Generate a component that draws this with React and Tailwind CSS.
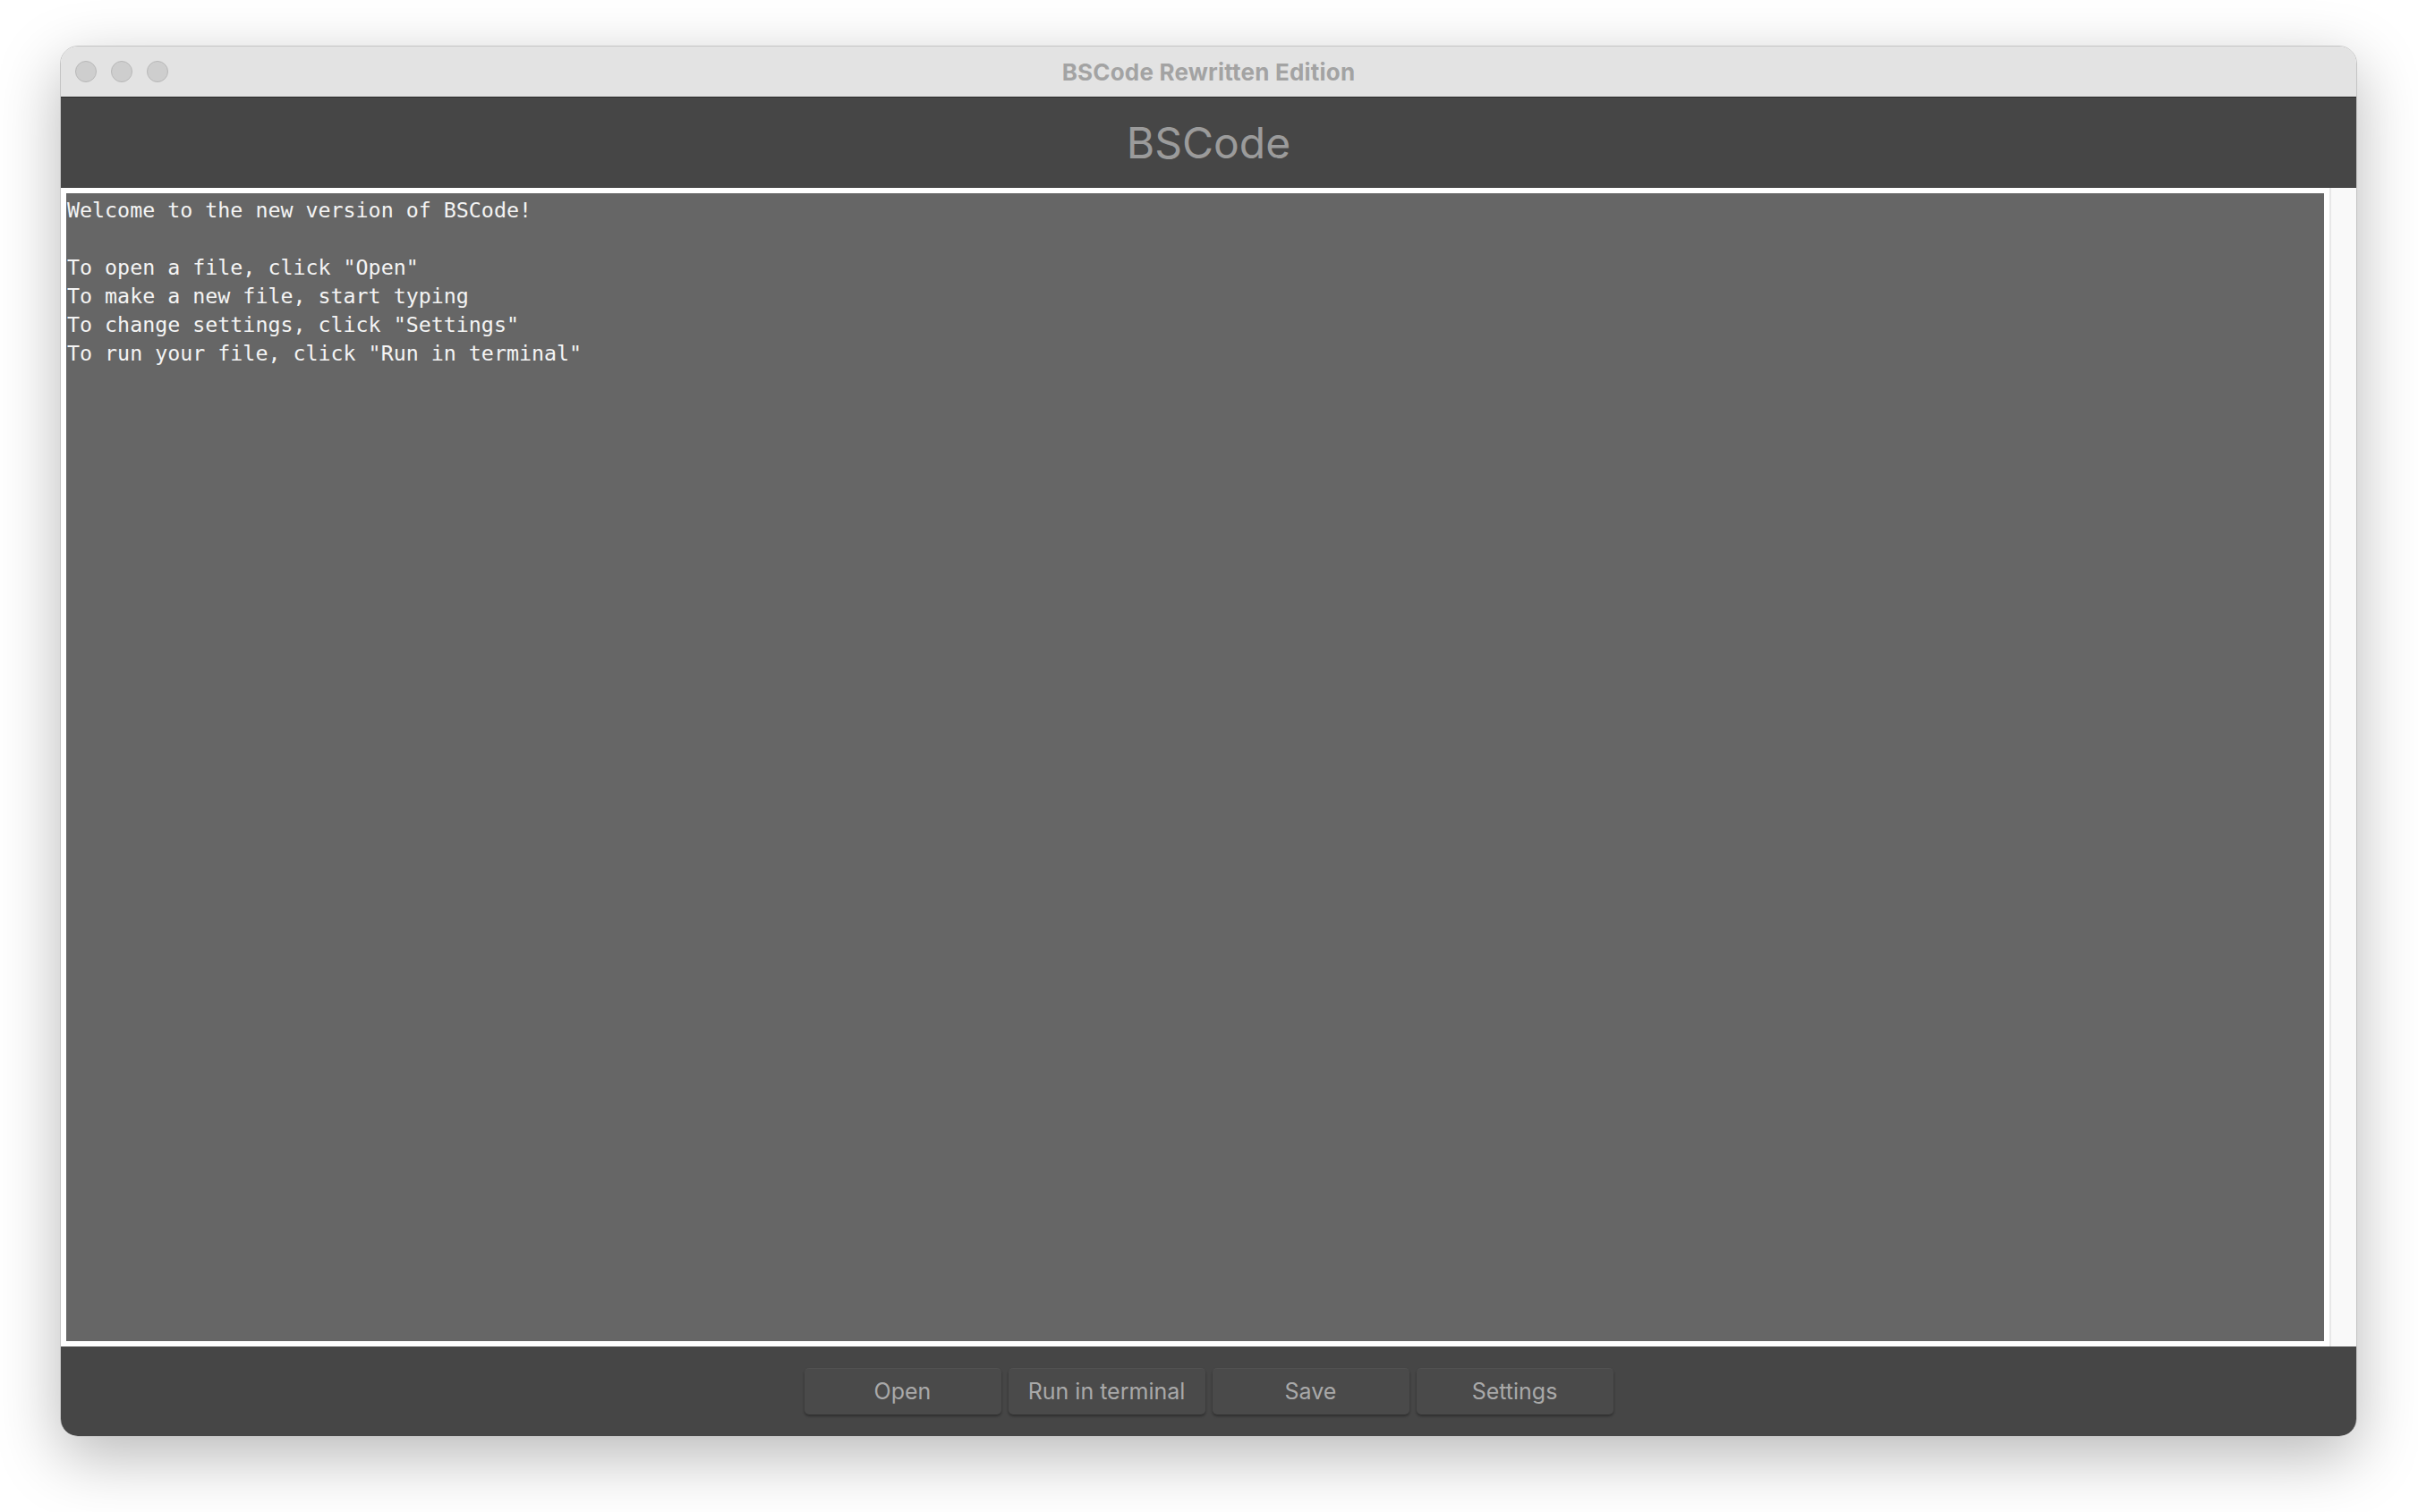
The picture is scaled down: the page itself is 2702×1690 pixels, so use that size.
import React from 'react';

const LINES = [
  'Welcome to the new version of BSCode!',
  '',
  'To open a file, click "Open"',
  'To make a new file, start typing',
  'To change settings, click "Settings"',
  'To run your file, click "Run in terminal"',
];

const BUTTONS = ['Open', 'Run in terminal', 'Save', 'Settings'];

function TrafficLights() {
  return (
    <div className="flex items-center gap-[16px]">
      {[0, 1, 2].map((i) => (
        <span
          key={i}
          className="block w-[24px] h-[24px] rounded-full bg-[#cecece] border border-[#b8b8b8]"
        />
      ))}
    </div>
  );
}

export default function App() {
  return (
    <div className="w-[2702px] h-[1690px] bg-white pl-[67px] pt-[51px] font-['Inter',sans-serif]">
      <div className="w-[2567px] h-[1555px] flex flex-col rounded-[20px] overflow-hidden border border-[#c4c4c4] shadow-[0_22px_70px_rgba(0,0,0,0.28)]">
        {/* title bar */}
        <div className="relative h-[57px] shrink-0 bg-[#e3e3e3] border-b border-[#2b2b2b] flex items-center justify-center">
          <div className="absolute left-[16px] top-[16px]">
            <TrafficLights />
          </div>
          <span className="text-[26px] font-bold text-[#a3a3a3] tracking-[0.2px]">
            BSCode Rewritten Edition
          </span>
        </div>

        {/* header */}
        <div className="h-[101px] shrink-0 bg-[#464646] flex items-center justify-center">
          <span className="text-[48px] text-[#9b9b9b] leading-none">BSCode</span>
        </div>

        {/* editor */}
        <div className="flex-1 flex bg-white min-h-0">
          <div className="flex-1 py-[6px] pl-[6px] pr-[6px]">
            <div className="h-full bg-[#666666] pt-[3px] pl-[1px] font-['DejaVu_Sans_Mono',monospace] text-[23.3px] leading-[32px] text-[#f4f4f4] whitespace-pre">
              {LINES.map((l, i) => (
                <div key={i} className="h-[32px]">{l}</div>
              ))}
            </div>
          </div>
          <div className="w-[30px] shrink-0 bg-[#f9f9f9] border-l-2 border-[#e8e8e8]" />
        </div>

        {/* footer */}
        <div className="h-[100px] shrink-0 bg-[#464646] flex items-center justify-center gap-[8px]">
          {BUTTONS.map((b) => (
            <button
              key={b}
              type="button"
              className="w-[220px] h-[52px] rounded-[5px] bg-[#4a4a4a] text-[#a9a9a9] text-[25px] shadow-[0_2px_3px_rgba(0,0,0,0.35)] border-t border-[#525252]"
            >
              {b}
            </button>
          ))}
        </div>
      </div>
    </div>
  );
}
